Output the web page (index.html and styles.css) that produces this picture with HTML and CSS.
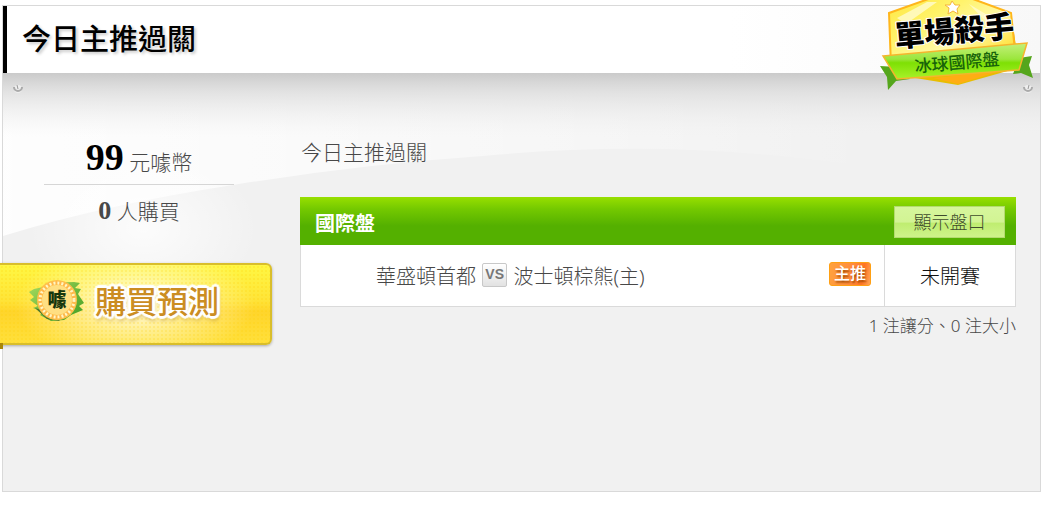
FILE: index.html
```html
<!DOCTYPE html>
<html lang="zh-Hant">
<head>
<meta charset="utf-8">
<title>今日主推過關</title>
<link rel="stylesheet" href="styles.css">
</head>
<body>
<main class="panel">
  <header class="panel-header">
    <h1 class="panel-title">今日主推過關</h1>
    <svg class="medal" viewBox="0 0 156 92" role="img" aria-label="單場殺手 冰球國際盤">
      <defs>
        <linearGradient id="gold" x1="0" y1="0" x2="1" y2="1">
          <stop offset="0" stop-color="#ffe53c"/><stop offset=".35" stop-color="#fff36a"/>
          <stop offset=".6" stop-color="#fff9a8"/><stop offset="1" stop-color="#ffd400"/>
        </linearGradient>
        <linearGradient id="ribbon" x1="0" y1="0" x2="0" y2="1">
          <stop offset="0" stop-color="#c4f07c"/><stop offset=".45" stop-color="#9be63c"/>
          <stop offset=".55" stop-color="#7ee004"/><stop offset="1" stop-color="#a8f22a"/>
        </linearGradient>
      </defs>
      <path d="M1 66 L18 67 L31 79 L17 81 L9 90 L8 77 Z" fill="#55a61c"/>
      <path d="M140 58 L153 56 L150 65 L154 78 L142 73 L134 74 Z" fill="#55a61c"/>
      <path d="M10 13 L44 1 L71 -5 L98 0 L132 13 L137 46 L132 70 L79 85 L30 77 L11 52 Z" fill="#e8bd00"/>
      <path d="M10 13 L72 -9 L132 13 L137 60 L12 66 Z" fill="url(#gold)" stroke="#ffb61c" stroke-width="2"/>
      <path d="M27 24 L58 2 L48 2 L18 18 Z M90 4 L110 25 L125 25 Z" fill="#fffbd0" opacity=".8"/>
      <path d="M54 78 L79 84 L121 71 Z" fill="#ffad14"/>
      <path d="M4 56 L148 43 L140 70 L18 79 Z" fill="url(#ribbon)" stroke="#f5b52d" stroke-width="1.5"/>
      <path d="M73 1 L76 5 L81 5 L78 9 L79 14 L74 11 L69 14 L70 8 L66 5 L71 5 Z" fill="#fff" stroke="#f5b63b"/>
      <g transform="rotate(-5 75 40)">
        <text class="medal-name" x="76" y="42">單場殺手</text>
        <text class="medal-league" x="76" y="69">冰球國際盤</text>
      </g>
    </svg>
  </header>
  <div class="panel-body">
    <svg class="scene" viewBox="0 0 1037 418" preserveAspectRatio="none" aria-hidden="true">
      <defs>
        <linearGradient id="fade" x1="0" x2="1" y1="0" y2="0">
          <stop offset="0" stop-color="#fff" stop-opacity=".9"/><stop offset=".3" stop-color="#fff" stop-opacity=".7"/>
          <stop offset=".65" stop-color="#fff" stop-opacity=".4"/><stop offset="1" stop-color="#fff" stop-opacity="0"/>
        </linearGradient>
        <radialGradient id="glow"><stop offset="0" stop-color="#fff" stop-opacity=".8"/><stop offset="1" stop-color="#fff" stop-opacity="0"/></radialGradient>
        <linearGradient id="shade" x1="0" x2="0" y1="0" y2="1">
          <stop offset="0" stop-color="#cacaca"/><stop offset=".12" stop-color="#d5d5d5"/>
          <stop offset=".3" stop-color="#dedede" stop-opacity=".85"/><stop offset="1" stop-color="#f1f1f1" stop-opacity="0"/>
        </linearGradient>
      </defs>
      <path d="M0 0 H800 Q840 40 870 95 Q680 64 480 83 Q360 91 230 112 Q100 132 0 163 Z" fill="url(#fade)"/>
      <ellipse cx="140" cy="155" rx="115" ry="80" fill="url(#glow)"/>
      <rect width="1037" height="64" fill="url(#shade)"/>
    </svg>
    <svg class="screw screw-left" viewBox="0 0 12 12" aria-hidden="true"><circle cx="6" cy="6" r="4" fill="#eee"/><path d="M1 4 A5 5 0 1 0 11 4 L9 4 A3 3 0 0 1 3 4 Z" fill="#aaa"/><path d="M5 2 L6 6" stroke="#999"/></svg>
    <svg class="screw screw-right" viewBox="0 0 12 12" aria-hidden="true"><circle cx="6" cy="6" r="4" fill="#eee"/><path d="M1 4 A5 5 0 1 0 11 4 L9 4 A3 3 0 0 1 3 4 Z" fill="#aaa"/><path d="M7 2 L6 6" stroke="#999"/></svg>
    <aside class="purchase">
      <div class="stats">
        <p class="price"><strong>99</strong> 元噱幣</p>
        <p class="buyers"><strong>0</strong> 人購買</p>
      </div>
      <button class="buy" type="button">
        <svg class="coin" viewBox="0 0 56 44" aria-hidden="true">
          <defs><linearGradient id="leaf" x1="0" x2="1" y1="0" y2="1"><stop offset="0" stop-color="#a8dc60"/><stop offset="1" stop-color="#3e9b20"/></linearGradient></defs>
          <path d="M5 10 L14 8 L20 4 L45 3 L51 4 L46 9 L52 10 L49 15 L55 24 L50 27 L54 31 L42 36 L35 41 L22 42 L11 36 L14 33 L4 29 L9 27 L1 21 L5 18 L0 13 Z" fill="url(#leaf)"/>
          <path d="M6 29 L18 40 L31 42 L22 34 Z" fill="#4b762c"/>
          <circle cx="28" cy="21" r="20" fill="#ffbf4a"/>
          <circle cx="28" cy="21" r="17" fill="none" stroke="#ffb84a" stroke-width="3"/>
          <circle cx="28" cy="21" r="17" fill="none" stroke="#fff6c4" stroke-width="3" stroke-dasharray="2 2"/>
          <circle cx="28" cy="21" r="15" fill="#ffdf82"/>
          <text class="coin-mark" x="28" y="28">噱</text>
        </svg>
        <span class="buy-label">購買預測</span>
      </button>
    </aside>
    <section class="picks">
      <h2 class="picks-title">今日主推過關</h2>
      <div class="market">
        <h3 class="market-title">國際盤</h3>
        <button class="odds" type="button">顯示盤口</button>
      </div>
      <table class="games">
        <tbody><tr>
          <td class="teams">華盛頓首都 <span class="versus">VS</span> 波士頓棕熊(主)</td>
          <td class="flag"><span class="pick">主推</span></td>
          <td class="status">未開賽</td>
        </tr></tbody>
      </table>
      <p class="summary">1 注讓分、0 注大小</p>
    </section>
  </div>
</main>
</body>
</html>
```
FILE: styles.css
```css
* { box-sizing: border-box; }

body {
  margin: 0;
  padding: 5px 6px 13px 2px;
  background: #fff;
  color: #484848;
  font-family: "Noto Sans", "Noto Sans CJK TC", sans-serif;
  font-weight: 300;
}

h1, h2, h3, p { margin: 0; }

button { font-family: inherit; cursor: pointer; }

.panel {
  display: flex;
  flex-direction: column;
  min-height: calc(100vh - 18px);
  border: 1px solid #d9d9d9;
  background: #f1f1f1;
}

.panel-header {
  position: relative;
  z-index: 1;
  display: flex;
  align-items: center;
  height: 67px;
  padding: 0 15px 2px;
  border-left: 4px solid #000;
  background: linear-gradient(90deg, #fff 70%, #f8f8f8);
}

.panel-title {
  color: #000;
  font-size: 29px;
  line-height: 40px;
  font-weight: 500;
  text-shadow: 2px 2px 3px #ccc;
}

.medal {
  position: absolute;
  top: -6px;
  right: 5px;
  width: 156px;
  height: 92px;
}

.medal text { text-anchor: middle; }

.medal-name {
  fill: #000;
  stroke: #fff;
  stroke-width: 2px;
  stroke-linejoin: round;
  paint-order: stroke;
  font-size: 30px;
  font-weight: 900;
}

.medal-league {
  fill: #17630a;
  font-size: 17px;
  font-weight: 500;
}

.panel-body {
  position: relative;
  display: flex;
  flex: 1;
  padding-right: 24px;
}

.scene {
  position: absolute;
  inset: 0;
  width: 100%;
  height: 100%;
}

.screw {
  position: absolute;
  top: 10px;
  width: 12px;
  height: 12px;
}

.screw-left { left: 9px; }
.screw-right { right: 6px; }

.purchase {
  position: relative;
  width: 269px;
  padding-top: 61px;
}

.stats {
  width: 190px;
  margin-left: 41px;
  text-align: center;
  font-size: 21px;
}

.price {
  height: 51px;
  border-bottom: 1px solid #d6d6d6;
  line-height: 46px;
}

.stats strong {
  font-family: "Liberation Serif", serif;
  font-weight: 700;
}

.price strong {
  color: #000;
  font-size: 38px;
}

.buyers { line-height: 52px; }
.buyers strong { font-size: 26px; }

.buy {
  position: relative;
  display: flex;
  align-items: center;
  gap: 10px;
  width: 272px;
  height: 82px;
  margin: 26px 0 0 -3px;
  padding: 0 0 6px 29px;
  border: 2px solid #d9be2b;
  border-left: 0;
  border-radius: 0 6px 6px 0;
  background:
    radial-gradient(circle, rgba(255, 205, 0, .2) 1px, rgba(255, 205, 0, 0) 1px) 0 0 / 4px 4px,
    radial-gradient(120px 60px at 50% 50%, #fffff0, rgba(255, 255, 220, .5) 50%, rgba(255, 255, 200, 0)),
    linear-gradient(#fff743, #ffe438 45%, #ffd52b 60%, #ffe03b);
  box-shadow: 0 1px 3px rgba(0, 0, 0, .3);
}

.buy::after {
  content: "";
  position: absolute;
  top: 100%;
  left: 0;
  border-top: 6px solid #a98708;
  border-right: 3px solid #a98708;
}

.coin {
  width: 56px;
  height: 44px;
}

.coin-mark {
  fill: #17370d;
  font-size: 19px;
  font-weight: 900;
  text-anchor: middle;
}

.buy-label {
  color: #cb8d22;
  font-size: 31px;
  line-height: 44px;
  font-weight: 500;
  text-shadow: -2px -2px 1px #fff, 2px -2px 1px #fff, -2px 2px 1px #fff, 2px 2px 1px #fff, 0 3px 1px #fff, 0 -3px 1px #fff, 3px 0 1px #fff, -3px 0 1px #fff, 1px 4px 4px #c59b2e;
}

.picks {
  position: relative;
  flex: 1;
  margin-left: 28px;
  padding-top: 63px;
}

.picks-title {
  margin: 0 0 29px 1px;
  font-size: 21px;
  line-height: 32px;
  font-weight: 300;
}

.market {
  display: flex;
  align-items: center;
  justify-content: space-between;
  height: 48px;
  padding: 2px 11px 0 15px;
  background: linear-gradient(#98df00, #74c900 25%, #54b000 60%, #54b000);
}

.market-title {
  color: #fff;
  font-size: 20px;
  font-weight: 700;
}

.odds {
  width: 111px;
  height: 32px;
  padding: 0;
  border: 1px solid #b4db70;
  background: linear-gradient(#d6f69c, #d2f494 50%, #bfed70 54%, #cef38a);
  color: #3f4c2c;
  font-size: 18px;
  line-height: 28px;
  font-weight: 300;
}

.games {
  width: 100%;
  border: 1px solid #dadada;
  border-top: 0;
  border-collapse: collapse;
  background: #fff;
  font-size: 20px;
}

.games td {
  height: 61px;
  padding: 0;
}

.games .teams { padding-left: 75px; }

.versus {
  display: inline-block;
  width: 25px;
  height: 24px;
  margin: 0 1px;
  border: 1px solid #c8c8c8;
  border-radius: 2px;
  background: linear-gradient(#fff, #e2e2e2);
  color: #777;
  font-family: "Liberation Sans", sans-serif;
  font-size: 14px;
  line-height: 20px;
  font-weight: 700;
  text-align: center;
  vertical-align: 5px;
}

.games .flag {
  width: 55px;
  padding-right: 13px;
}

.pick {
  display: block;
  width: 42px;
  height: 24px;
  margin-bottom: 2px;
  border: 1px solid #ffa013;
  border-radius: 3px;
  background: linear-gradient(100deg, #ffa23e, #ff8a3d 55%, #ff7525 80%, #ffa557);
  color: #fff;
  font-size: 16px;
  line-height: 21px;
  font-weight: 500;
  text-align: center;
  text-shadow: 1px 2px 2px #a44a00;
}

.games .status {
  width: 131px;
  border-left: 1px solid #dadada;
  color: #111;
  text-align: center;
}

.summary {
  padding-top: 5px;
  font-size: 17px;
  line-height: 28px;
  text-align: right;
}
```
